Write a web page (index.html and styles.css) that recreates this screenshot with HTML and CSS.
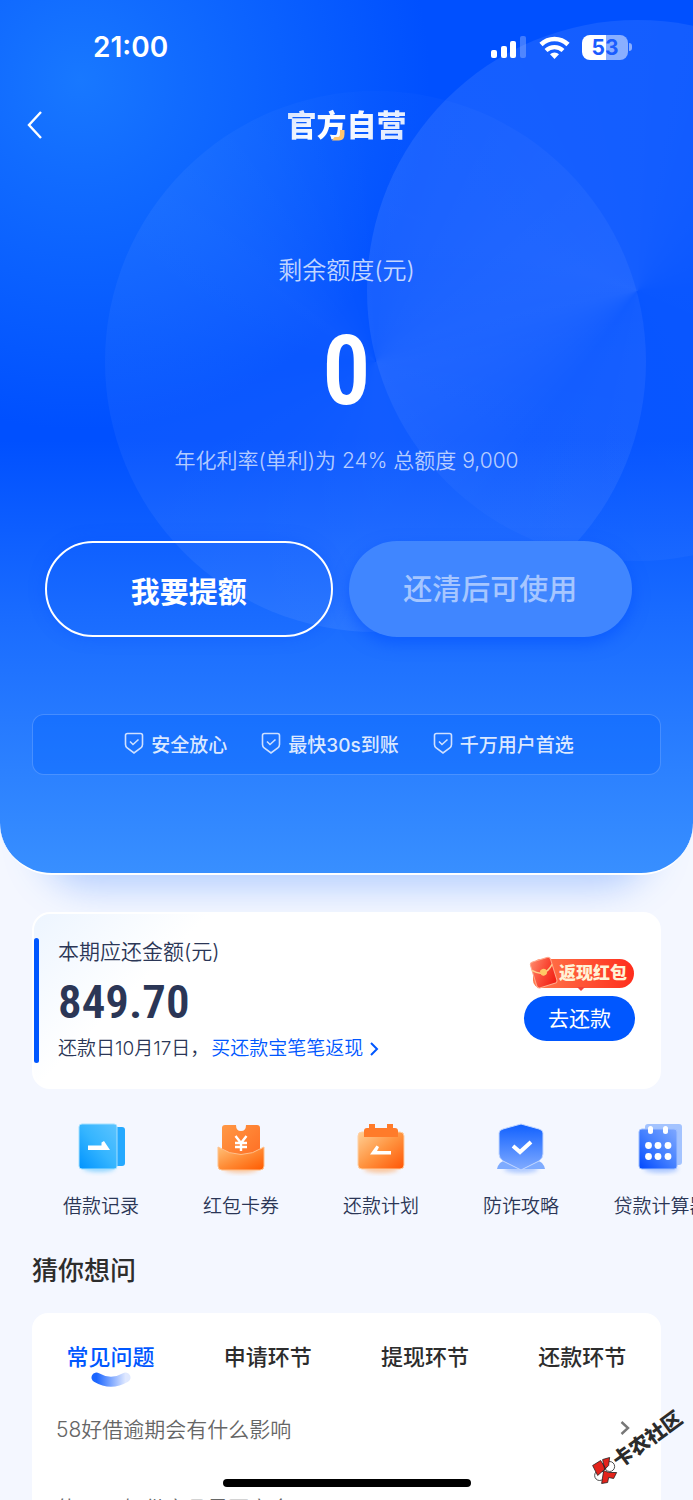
FILE: index.html
```html
<!DOCTYPE html>
<html lang="zh-CN">
<head>
<meta charset="utf-8">
<meta name="viewport" content="width=device-width, initial-scale=1">
<title>官方自营</title>
<link rel="stylesheet" href="styles.css">
</head>
<body>
<div class="screen">
  <header class="hero">
    <span class="orb orb-center"></span>
    <span class="orb orb-right"></span>

    <div class="status">
      <span class="status-time">21:00</span>
      <div class="status-icons">
        <svg width="36" height="22" viewBox="0 0 36 22" aria-hidden="true">
          <g fill="#fff"><rect x="0" y="14" width="6" height="8" rx="2"/><rect x="10" y="10" width="6" height="12" rx="2"/><rect x="19" y="5" width="6" height="17" rx="2"/><rect x="29" y="0" width="6" height="22" rx="2" opacity=".25"/></g>
        </svg>
        <svg width="31" height="23" viewBox="0 0 31 23" aria-hidden="true">
          <path d="M2 8.500A19.500 19.500 0 0 1 29 8.500" fill="none" stroke="#fff" stroke-width="4.600"/>
          <path d="M7 14.500A12.400 12.400 0 0 1 24 14.500" fill="none" stroke="#fff" stroke-width="4.200"/>
          <path d="M15.500 23l-4.500-4.700a6.400 6.400 0 0 1 9 0z" fill="#fff"/>
        </svg>
        <span class="battery"><span class="battery-body">53</span><span class="battery-tip"></span></span>
      </div>
    </div>

    <nav class="topbar">
      <button class="back" type="button" aria-label="返回">
        <svg width="16" height="28" viewBox="0 0 16 28" aria-hidden="true"><path d="M14 1L2 14l12 13" fill="none" stroke="#fff" stroke-width="2.400"/></svg>
      </button>
      <div class="brand-box">
        <h1 class="brand">官方自营</h1>
        <svg class="brand-accent" width="13" height="11" viewBox="0 0 13 11" aria-hidden="true"><path d="M8 0h4.500v4Q12.500 10.500 7 10.500H0L2.500 7H6Q8 7 8 4z" fill="#ffc46b"/></svg>
      </div>
    </nav>

    <section class="quota">
      <p class="quota-label">剩余额度(元)</p>
      <p class="quota-value">0</p>
      <p class="quota-note">年化利率(单利)为 24% 总额度 9,000</p>
    </section>

    <div class="actions">
      <button class="action action-line" type="button">我要提额</button>
      <button class="action action-solid" type="button" disabled>还清后可使用</button>
    </div>

    <ul class="trust">
      <li><svg class="shield" viewBox="0 0 20 22" aria-hidden="true"><path d="M3.500 1.500h13q2 0 2 2v9q0 2-1.700 3.500L10 21l-6.800-5Q1.500 14.500 1.500 12.500v-9q0-2 2-2z"/><path d="M6 9.500l3 3 5.500-5"/></svg>安全放心</li>
      <li><svg class="shield" viewBox="0 0 20 22" aria-hidden="true"><path d="M3.500 1.500h13q2 0 2 2v9q0 2-1.700 3.500L10 21l-6.800-5Q1.500 14.500 1.500 12.500v-9q0-2 2-2z"/><path d="M6 9.500l3 3 5.500-5"/></svg>最快30s到账</li>
      <li><svg class="shield" viewBox="0 0 20 22" aria-hidden="true"><path d="M3.500 1.500h13q2 0 2 2v9q0 2-1.700 3.500L10 21l-6.800-5Q1.500 14.500 1.500 12.500v-9q0-2 2-2z"/><path d="M6 9.500l3 3 5.500-5"/></svg>千万用户首选</li>
    </ul>
  </header>

  <main class="content">
    <section class="bill">
      <div class="bill-info">
        <p class="bill-label">本期应还金额(元)</p>
        <p class="bill-amount">849.70</p>
        <p class="bill-date">还款日10月17日，<a class="bill-link" href="#">买还款宝笔笔返现<svg width="10" height="16" viewBox="0 0 10 16" aria-hidden="true"><path d="M2 2l6 6-6 6" fill="none" stroke="#0057ff" stroke-width="2"/></svg></a></p>
      </div>
      <div class="bill-pay">
        <span class="bonus">
          <svg class="packet" width="30" height="34" viewBox="0 0 30 34" aria-hidden="true">
            <defs><linearGradient id="pk" x1="0" y1="0" x2="1" y2="1"><stop offset="0" stop-color="#ff8a6b"/><stop offset=".5" stop-color="#f94a36"/><stop offset="1" stop-color="#f0180f"/></linearGradient></defs>
            <g transform="rotate(-17 15 16)"><rect x="4" y="3" width="21" height="27" rx="3" fill="url(#pk)" stroke="#ffa98c"/><path d="M4 11q10 11 21 0" fill="none" stroke="#ffcf8a" stroke-width="1.500"/><circle cx="14.500" cy="16" r="3.400" fill="#ffc965"/></g>
          </svg>返现红包</span>
        <button class="pay" type="button">去还款</button>
      </div>
    </section>

    <nav class="shortcuts">
      <a class="shortcut" href="#">
        <svg width="56" height="56" viewBox="0 0 56 56" aria-hidden="true">
          <defs><linearGradient id="a1" x1="1" y1="0" x2="0" y2="1"><stop offset="0" stop-color="#5cc4ff"/><stop offset=".5" stop-color="#35b5ff"/><stop offset="1" stop-color="#0093ff"/></linearGradient><filter id="soft" x="-30%" y="-100%" width="160%" height="300%"><feGaussianBlur stdDeviation="2"/></filter></defs>
          <ellipse cx="26" cy="48" rx="16" ry="4" fill="#35b5ff" opacity=".5" filter="url(#soft)"/>
          <rect x="38" y="7" width="14" height="39" rx="3" fill="#25a9ff"/>
          <rect x="6" y="4" width="38" height="45" rx="3" fill="url(#a1)" stroke="#a5e0ff"/>
          <path d="M15 25.500h13.500v-3l2.500-1.500 6 9H15z" fill="#fff"/>
        </svg>
        <span>借款记录</span>
      </a>
      <a class="shortcut" href="#">
        <svg width="56" height="56" viewBox="0 0 56 56" aria-hidden="true">
          <defs><linearGradient id="b1" x1="0" y1="0" x2="1" y2="1"><stop offset="0" stop-color="#ff9845"/><stop offset="1" stop-color="#ff6a20"/></linearGradient><linearGradient id="b2" x1="0" y1="0" x2="1" y2="1"><stop offset="0" stop-color="#ffc078"/><stop offset=".5" stop-color="#ff8b35"/><stop offset="1" stop-color="#ff5a00"/></linearGradient></defs>
          <ellipse cx="28" cy="49" rx="17" ry="4" fill="#ff9a45" opacity=".5" filter="url(#soft)"/>
          <path d="M12 5h11q0 6 5 6t5-6h11q3 0 3 3v36H9V8q0-3 3-3z" fill="url(#b1)"/>
          <path d="M5 27q23 15 46 0v19q0 4-4 4H9q-4 0-4-4z" fill="url(#b2)" stroke="#ffc18c"/>
          <path d="M22.500 16l5.500 7 5.500-7M22 23h12M22 27h12M28 23v8" fill="none" stroke="#fff" stroke-width="2.400"/>
        </svg>
        <span>红包卡券</span>
      </a>
      <a class="shortcut" href="#">
        <svg width="56" height="56" viewBox="0 0 56 56" aria-hidden="true">
          <defs><linearGradient id="c1" x1="0" y1="0" x2="1" y2="1"><stop offset="0" stop-color="#ffd096"/><stop offset=".5" stop-color="#ff9440"/><stop offset="1" stop-color="#ff5505"/></linearGradient></defs>
          <ellipse cx="28" cy="49" rx="17" ry="4" fill="#ff9a45" opacity=".5" filter="url(#soft)"/>
          <rect x="5" y="12" width="46" height="37" rx="4" fill="url(#c1)" stroke="#ffd0a5"/>
          <path d="M11 17v-6q0-3 3-3h2V4h6v4h12V4h6v4h2q3 0 3 3v6z" fill="#ff7b2a"/>
          <path d="M17 34.500l6.500-9 2.500 1.500-2 4h14v3.500z" fill="#fff"/>
        </svg>
        <span>还款计划</span>
      </a>
      <a class="shortcut" href="#">
        <svg width="56" height="56" viewBox="0 0 56 56" aria-hidden="true">
          <defs><linearGradient id="d1" x1="0" y1="0" x2="0" y2="1"><stop offset="0" stop-color="#1060ff"/><stop offset="1" stop-color="#82acff"/></linearGradient></defs>
          <ellipse cx="28" cy="49" rx="17" ry="4" fill="#6a9dff" opacity=".5" filter="url(#soft)"/>
          <path d="M4 49q2-8 8-8h32q6 0 8 8z" fill="#7eabff"/>
          <path d="M28 4l18 5q4 1 4 4v21q0 4-4 7L28 50 10 41q-4-3-4-7V13q0-3 4-4z" fill="url(#d1)" stroke="#c4d8ff"/>
          <path d="M20 26l7 6 11-10" fill="none" stroke="#fff" stroke-width="4"/>
        </svg>
        <span>防诈攻略</span>
      </a>
      <a class="shortcut" href="#">
        <svg width="56" height="56" viewBox="0 0 56 56" aria-hidden="true">
          <defs><linearGradient id="e1" x1="1" y1="0" x2="0" y2="1"><stop offset="0" stop-color="#7fa8ff"/><stop offset=".5" stop-color="#4480ff"/><stop offset="1" stop-color="#0048ff"/></linearGradient></defs>
          <ellipse cx="28" cy="49" rx="17" ry="4" fill="#6a9dff" opacity=".5" filter="url(#soft)"/>
          <rect x="12" y="4" width="37" height="41" rx="3" fill="#a3c3ff"/>
          <rect x="6" y="9" width="38" height="40" rx="3" fill="url(#e1)" stroke="#9dbeff"/>
          <g fill="#fff"><rect x="15" y="6" width="5" height="8" rx="2.500"/><rect x="30" y="6" width="5" height="8" rx="2.500"/><circle cx="15.500" cy="25.500" r="3.400"/><circle cx="25" cy="25.500" r="3.400"/><circle cx="35" cy="25.500" r="3.400"/><circle cx="15.500" cy="36.500" r="3.400"/><circle cx="25" cy="36.500" r="3.400"/><circle cx="35" cy="36.500" r="3.400"/></g>
        </svg>
        <span>贷款计算器</span>
      </a>
    </nav>

    <h2 class="faq-title">猜你想问</h2>
    <section class="faq">
      <div class="tabs" role="tablist">
        <button class="tab tab-active" type="button" role="tab" aria-selected="true">常见问题<svg class="smile" width="40" height="16" viewBox="0 0 40 16" aria-hidden="true"><defs><linearGradient id="sm"><stop offset="0" stop-color="#1c66ff"/><stop offset="1" stop-color="#dfe8ff"/></linearGradient></defs><path d="M5.500 5.500Q20 14 34.500 5.500" fill="none" stroke="url(#sm)" stroke-width="10" stroke-linecap="round"/></svg></button>
        <button class="tab" type="button" role="tab" aria-selected="false">申请环节</button>
        <button class="tab" type="button" role="tab" aria-selected="false">提现环节</button>
        <button class="tab" type="button" role="tab" aria-selected="false">还款环节</button>
      </div>
      <div class="questions">
        <a class="question" href="#">58好借逾期会有什么影响<svg width="10" height="16" viewBox="0 0 10 16" aria-hidden="true"><path d="M1.500 2l6.500 6-6.500 6" fill="none" stroke="#777" stroke-width="2.400"/></svg></a>
        <a class="question" href="#">使用58好借产品是否安全<svg width="10" height="16" viewBox="0 0 10 16" aria-hidden="true"><path d="M1.500 2l6.500 6-6.500 6" fill="none" stroke="#777" stroke-width="2.400"/></svg></a>
      </div>
    </section>
  </main>

  <div class="watermark">
    <svg width="26" height="26" viewBox="0 0 26 26" aria-hidden="true">
      <g transform="rotate(36 13 13)" stroke="#222" stroke-width=".8"><circle cx="18" cy="9" r="5" fill="#fff"/><circle cx="8" cy="18" r="5" fill="#fff"/><path d="M1 8l8-5 5 8-8 7zM11 2l7-2-1 8-4 4zM12 13l5 2 8 0-3 6-5-1-1 5-6 1z" fill="#e3231b"/></g>
    </svg>
    <span>卡农社区</span>
  </div>
  <div class="home-indicator"></div>
</div>
</body>
</html>
```

FILE: styles.css
```css
* {
  box-sizing: border-box;
  margin: 0;
  padding: 0;
}

body {
  background: #f4f7ff;
  color: #2b3656;
  font-family: Inter, "Noto Sans CJK SC", sans-serif;
}

button {
  border: 0;
  background: none;
  font: inherit;
  color: inherit;
}

a {
  color: inherit;
  text-decoration: none;
}

ul {
  list-style: none;
}

svg {
  flex: none;
}

.screen {
  position: relative;
  height: 100vh;
  overflow: hidden;
}

/* Hero */
.hero {
  position: relative;
  overflow: hidden;
  padding-bottom: 98px;
  border-bottom: 2px solid #fff;
  border-radius: 0 0 52px 52px;
  color: #fff;
  background:
    radial-gradient(circle at 80px 80px, #1878ff 0, rgba(20, 112, 255, .85) 100px, rgba(0, 80, 255, 0) 350px),
    linear-gradient(#0050ff 0, #0050ff 440px, #1a6cff 620px, #388fff 100%);
}

.screen::before {
  content: "";
  position: absolute;
  top: 700px;
  left: 40px;
  right: 40px;
  height: 175px;
  border-radius: 50px;
  box-shadow: 0 12px 36px rgba(60, 130, 255, .36);
}

.orb {
  position: absolute;
  width: 541px;
  height: 541px;
  border-radius: 50%;
}

.orb-center {
  top: 91px;
  left: calc(50% - 242px);
  background: conic-gradient(rgba(255, 255, 255, .01), rgba(255, 255, 255, .06) 25%, rgba(255, 255, 255, .07) 50%, rgba(255, 255, 255, .04) 75%, rgba(255, 255, 255, .05) 85%, rgba(255, 255, 255, .01));
}

.orb-right {
  top: 20px;
  right: -215px;
  background: conic-gradient(rgba(255, 255, 255, .08), rgba(255, 255, 255, .04) 25%, rgba(255, 255, 255, .03) 50%, rgba(255, 255, 255, .02) 60%, rgba(255, 255, 255, .08) 72%, rgba(255, 255, 255, .09) 80%, rgba(255, 255, 255, .08));
}

.status,
.topbar,
.quota,
.actions,
.trust {
  position: relative;
}

.status {
  display: flex;
  align-items: center;
  justify-content: space-between;
  height: 94px;
  padding: 0 61px 0 93px;
}

.status-time {
  font-size: 28px;
  font-weight: 600;
}

.status-icons {
  display: flex;
  align-items: center;
  gap: 12px;
}

.battery {
  display: flex;
  align-items: center;
  gap: 1px;
}

.battery-body {
  width: 46px;
  height: 25px;
  border-radius: 8px;
  background: linear-gradient(90deg, #fff 53%, rgba(255, 255, 255, .5) 53%);
  color: #1a5cff;
  font-size: 21px;
  font-weight: 700;
  line-height: 25px;
  text-align: center;
}

.battery-tip {
  width: 3px;
  height: 8px;
  border-radius: 0 3px 3px 0;
  background: rgba(255, 255, 255, .5);
}

.topbar {
  display: flex;
  align-items: center;
  justify-content: center;
  height: 62px;
}

.back {
  position: absolute;
  left: 27px;
  display: flex;
}

.brand-box {
  position: relative;
}

.brand {
  font-size: 30px;
  font-weight: 900;
  line-height: 44px;
  background: linear-gradient(135deg, #cfdfff, #fff 40%, #d5e3ff);
  -webkit-background-clip: text;
  background-clip: text;
  color: transparent;
}

.brand-accent {
  position: absolute;
  left: 45px;
  bottom: 6px;
}

.quota {
  padding-top: 99px;
  text-align: center;
}

.quota-label {
  color: rgba(255, 255, 255, .75);
  font-size: 24px;
  font-weight: 350;
  line-height: 32px;
}

.quota-value {
  padding-top: 34px;
  font-family: "Roboto Condensed", Roboto, sans-serif;
  font-size: 96px;
  font-weight: 600;
  line-height: 100px;
}

.quota-note {
  padding-top: 25px;
  color: rgba(255, 255, 255, .7);
  font-size: 21px;
  font-weight: 350;
  line-height: 30px;
}

.actions {
  display: flex;
  gap: 16px;
  padding: 65px 61px 0 45px;
}

.action {
  flex: 1;
  height: 96px;
  padding-bottom: 4px;
  border-radius: 48px;
  font-size: 29px;
  font-weight: 500;
}

.action-line {
  padding: 2px 0 0;
  border: 2px solid #fff;
  font-weight: 600;
  box-shadow: 0 0 16px rgba(0, 80, 255, .35);
}

.action-solid {
  background: #4086ff;
  color: #a6c6ff;
  box-shadow: 0 6px 16px rgba(0, 80, 255, .6);
}

.trust {
  display: flex;
  align-items: center;
  justify-content: center;
  gap: 34px;
  height: 61px;
  margin: 77px 32px 0;
  padding: 0 0 3px 5px;
  border: 1px solid rgba(255, 255, 255, .2);
  border-radius: 12px;
  background: rgba(0, 96, 255, .35);
  color: rgba(255, 255, 255, .85);
  font-size: 19px;
  font-weight: 500;
}

.trust li {
  display: flex;
  align-items: center;
  gap: 7px;
}

.shield {
  width: 20px;
  height: 22px;
  fill: none;
  stroke: #cfe0ff;
  stroke-width: 1.6;
}

/* Repayment card */
.content {
  position: relative;
  padding: 37px 32px 0;
}

.bill {
  display: flex;
  align-items: center;
  justify-content: space-between;
  height: 177px;
  padding: 0 24px 2px 0;
  border: 2px solid #fff;
  border-radius: 18px;
  background: linear-gradient(135deg, #edf5ff, #fff 22%);
}

.bill-info {
  position: relative;
  padding-left: 24px;
}

.bill-info::before {
  content: "";
  position: absolute;
  top: 1px;
  bottom: 0;
  left: 0;
  width: 5px;
  border-radius: 3px;
  background: #0057ff;
}

.bill-label {
  font-size: 21px;
  font-weight: 350;
  line-height: 30px;
}

.bill-amount {
  padding-top: 2px;
  font-family: "Roboto Condensed", Roboto, sans-serif;
  font-size: 47px;
  font-weight: 600;
  line-height: 66px;
}

.bill-date {
  display: flex;
  align-items: center;
  font-size: 19px;
  font-weight: 350;
  line-height: 28px;
}

.bill-link {
  display: flex;
  align-items: center;
  gap: 6px;
  padding-left: 2px;
  color: #0057ff;
}

.bill-pay {
  display: flex;
  flex-direction: column;
  align-items: flex-end;
  gap: 8px;
}

.bonus {
  position: relative;
  height: 29px;
  margin-right: 1px;
  padding: 0 7px 0 26px;
  border-radius: 8px 15px 15px 8px;
  background: linear-gradient(90deg, #ff7a4d, #ff2d1c);
  color: #fff3d6;
  font-size: 17px;
  font-weight: 900;
  line-height: 29px;
}

.bonus::after {
  content: "";
  position: absolute;
  left: 44px;
  top: 28px;
  border: 4px solid transparent;
  border-top-color: #f3443a;
}

.packet {
  position: absolute;
  left: -4px;
  top: -3px;
}

.pay {
  width: 111px;
  height: 45px;
  padding-bottom: 3px;
  border-radius: 23px;
  background: #0057ff;
  color: #fff;
  font-size: 21px;
}

/* Shortcuts */
.shortcuts {
  display: flex;
  margin: 0 -32px 0 -1px;
  padding-top: 31px;
  overflow: hidden;
}

.shortcut {
  display: flex;
  flex: 0 0 140px;
  flex-direction: column;
  align-items: center;
  gap: 16px;
  font-size: 19px;
  font-weight: 350;
  line-height: 30px;
  white-space: nowrap;
}

/* Questions */
.faq-title {
  padding-top: 30px;
  color: #2d2d2d;
  font-size: 26px;
  font-weight: 500;
  line-height: 38px;
}

.faq {
  margin-top: 23px;
  padding-top: 24px;
  border-radius: 16px;
  background: #fff;
}

.tabs {
  display: flex;
}

.tab {
  position: relative;
  flex: 1;
  color: #2d2d2d;
  font-size: 22px;
  font-weight: 500;
  line-height: 40px;
}

.tab-active {
  color: #0057ff;
}

.smile {
  position: absolute;
  top: 35px;
  left: calc(50% - 20px);
}

.questions {
  padding-top: 11px;
}

.question {
  display: flex;
  align-items: center;
  justify-content: space-between;
  height: 79px;
  padding: 0 31px 0 24px;
  color: #666;
  font-size: 21px;
  font-weight: 350;
}

/* Overlays */
.watermark {
  position: absolute;
  right: 3px;
  bottom: 40px;
  display: flex;
  align-items: center;
  color: #2b2b2b;
  font-size: 20px;
  font-weight: 900;
  line-height: 26px;
  transform: rotate(-36deg);
}

.home-indicator {
  position: absolute;
  bottom: 13px;
  left: calc(50% - 124px);
  width: 248px;
  height: 8px;
  border-radius: 4px;
  background: #000;
}
```
